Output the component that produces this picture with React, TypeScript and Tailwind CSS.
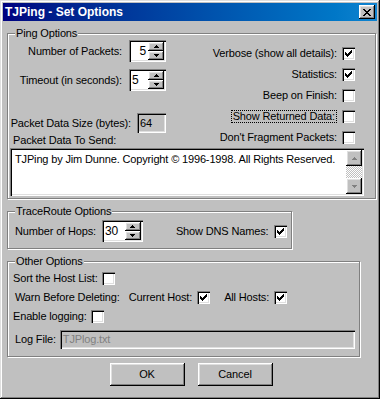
import type { ReactNode } from "react";

const raised =
  "shadow-[inset_-1px_-1px_#000,inset_1px_1px_#fff,inset_-2px_-2px_#808080,inset_2px_2px_#dfdfdf]";
const sunken =
  "shadow-[inset_1px_1px_#808080,inset_2px_2px_#000,inset_-1px_-1px_#fff,inset_-2px_-2px_#dfdfdf]";

const Check = ({ checked }: { checked?: boolean }) => (
  <span className={`w-[13px] h-[13px] shrink-0 bg-white flex items-center justify-center ${sunken}`}>
    {checked && (
      <svg width="7" height="7" viewBox="0 0 7 7" shapeRendering="crispEdges">
        <path d="M0 2h1v3H0zM1 3h1v3H1zM2 4h1v3H2zM3 3h1v3H3zM4 2h1v3H4zM5 1h1v3H5zM6 0h1v3H6z" fill="#000" />
      </svg>
    )}
  </span>
);

const Arrow = ({ up, color = "#000" }: { up?: boolean; color?: string }) => (
  <svg width="5" height="3" viewBox="0 0 5 3" shapeRendering="crispEdges">
    {up ? (
      <path d="M2 0h1v1H2zM1 1h3v1H1zM0 2h5v1H0z" fill={color} />
    ) : (
      <path d="M0 0h5v1H0zM1 1h3v1H1zM2 2h1v1H2z" fill={color} />
    )}
  </svg>
);

const Spin = ({ value, width, right }: { value: string; width: string; right?: boolean }) => (
  <div className={`${width} h-[22px] shrink-0 bg-white p-[2px] flex ${sunken}`}>
    <span className={`flex-1 leading-[18px] pl-[1px] pr-[2px] text-[12px] ${right ? "text-right" : ""}`}>{value}</span>
    <div className="w-[16px] flex flex-col">
      <span className={`h-[9px] bg-[#c0c0c0] flex items-center justify-center ${raised}`}>
        <Arrow up />
      </span>
      <span className={`h-[9px] bg-[#c0c0c0] flex items-center justify-center ${raised}`}>
        <Arrow />
      </span>
    </div>
  </div>
);

const Group = ({ title, className, children }: { title: string; className: string; children: ReactNode }) => (
  <div className={`relative border border-[#808080] shadow-[inset_1px_1px_#fff,1px_1px_#fff] ${className}`}>
    <span className="absolute -top-[7px] left-[7px] px-[1px] bg-[#c0c0c0] leading-[13px]">{title}</span>
    {children}
  </div>
);

const CheckRow = ({ label, checked, focus }: { label: string; checked?: boolean; focus?: boolean }) => (
  <div className="h-[21px] flex items-center gap-[5px]">
    <span className={focus ? "border border-dotted border-black px-[1px] leading-[11px]" : ""}>{label}</span>
    <Check checked={checked} />
  </div>
);

export default function App() {
  return (
    <div
      className={`w-[380px] h-[399px] bg-[#c0c0c0] p-[3px] flex flex-col whitespace-nowrap text-[11px] tracking-[-0.15px] text-black font-['Liberation_Sans',Arial,sans-serif] shadow-[inset_-1px_-1px_#000,inset_1px_1px_#dfdfdf,inset_-2px_-2px_#808080,inset_2px_2px_#fff]`}
    >
      <div className="h-[18px] flex items-center justify-between pl-[2px] pr-[2px] bg-gradient-to-r from-[#000080] to-[#1084d0]">
        <span className="text-white font-bold text-[12px] tracking-normal">TJPing - Set Options</span>
        <span className={`w-[16px] h-[14px] bg-[#c0c0c0] flex items-center justify-center ${raised}`}>
          <svg width="8" height="7" viewBox="0 0 8 7" shapeRendering="crispEdges">
            <path
              d="M0 0h2v1H0zM6 0h2v1H6zM1 1h2v1H1zM5 1h2v1H5zM2 2h4v1H2zM3 3h2v1H3zM2 4h4v1H2zM1 5h2v1H1zM5 5h2v1H5zM0 6h2v1H0zM6 6h2v1H6z"
              fill="#000"
            />
          </svg>
        </span>
      </div>

      <div className="pl-[4px] flex flex-col">
        {/* Ping options */}
        <Group title="Ping Options" className="mt-[12px] w-[369px] h-[166px]">
          <div className="flex">
            <div className="w-[158px] flex flex-col items-end">
              <div className="mt-[6px] flex items-center gap-[7px]">
                <span>Number of Packets:</span>
                <Spin value="5" width="w-[37px]" right />
              </div>
              <div className="mt-[7px] flex items-center gap-[7px]">
                <span>Timeout (in seconds):</span>
                <Spin value="5" width="w-[37px]" />
              </div>
              <div className="mt-[22px] flex items-center gap-[6px]">
                <span>Packet Data Size (bytes):</span>
                <span className={`w-[29px] h-[20px] pl-[3px] leading-[20px] bg-[#c0c0c0] ${sunken}`}>64</span>
              </div>
              <div className="w-full pl-[5px] mt-[1px] leading-[13px]">Packet Data To Send:</div>
            </div>
            <div className="flex-1 mt-[9px] pr-[20px] flex flex-col items-end">
              <CheckRow label="Verbose (show all details):" checked />
              <CheckRow label="Statistics:" checked />
              <CheckRow label="Beep on Finish:" />
              <CheckRow label="Show Returned Data:" focus />
              <CheckRow label="Don't Fragment Packets:" />
            </div>
          </div>
          <div className={`ml-[2px] w-[354px] h-[48px] bg-white p-[2px] flex ${sunken}`}>
            <span className="flex-1 pl-[3px] pt-[3px] leading-[13px]">
              TJPing by Jim Dunne. Copyright © 1996-1998. All Rights Reserved.
            </span>
            <div className="w-[16px] flex flex-col">
              <span className={`h-[16px] bg-[#c0c0c0] flex items-center justify-center ${raised}`}>
                <Arrow up color="#808080" />
              </span>
              <span className="flex-1 bg-[repeating-conic-gradient(#c0c0c0_0_25%,#fff_0_50%)] bg-[length:2px_2px]" />
              <span className={`h-[16px] bg-[#c0c0c0] flex items-center justify-center ${raised}`}>
                <Arrow color="#808080" />
              </span>
            </div>
          </div>
        </Group>

        {/* TraceRoute options */}
        <Group title="TraceRoute Options" className="mt-[12px] w-[285px] h-[38px]">
          <div className="mt-[8px] pl-[7px] flex items-center">
            <span>Number of Hops:</span>
            <span className="ml-[6px]">
              <Spin value="30" width="w-[41px]" />
            </span>
            <span className="ml-[33px]">Show DNS Names:</span>
            <span className="ml-[6px]">
              <Check checked />
            </span>
          </div>
        </Group>

        {/* Other options */}
        <Group title="Other Options" className="mt-[12px] w-[353px] h-[96px]">
          <div className="mt-[10px] pl-[5px] h-[13px] flex items-center gap-[4px]">
            <span>Sort the Host List:</span>
            <Check />
          </div>
          <div className="mt-[6px] pl-[7px] h-[13px] flex items-center">
            <span>Warn Before Deleting:</span>
            <span className="ml-[9px]">Current Host:</span>
            <span className="ml-[5px]">
              <Check checked />
            </span>
            <span className="ml-[14px]">All Hosts:</span>
            <span className="ml-[5px]">
              <Check checked />
            </span>
          </div>
          <div className="mt-[6px] pl-[5px] h-[13px] flex items-center gap-[4px]">
            <span>Enable logging:</span>
            <Check />
          </div>
          <div className="mt-[7px] pl-[7px] flex items-center gap-[4px]">
            <span>Log File:</span>
            <span className={`w-[295px] h-[19px] pl-[3px] leading-[19px] bg-[#c0c0c0] text-[#808080] ${sunken}`}>
              TJPlog.txt
            </span>
          </div>
        </Group>
      </div>

      <div className="mt-[6px] flex justify-center gap-[13px] pl-[2px]">
        <button className={`w-[75px] h-[23px] bg-[#c0c0c0] ${raised}`}>OK</button>
        <button className={`w-[75px] h-[23px] bg-[#c0c0c0] ${raised}`}>Cancel</button>
      </div>
    </div>
  );
}
